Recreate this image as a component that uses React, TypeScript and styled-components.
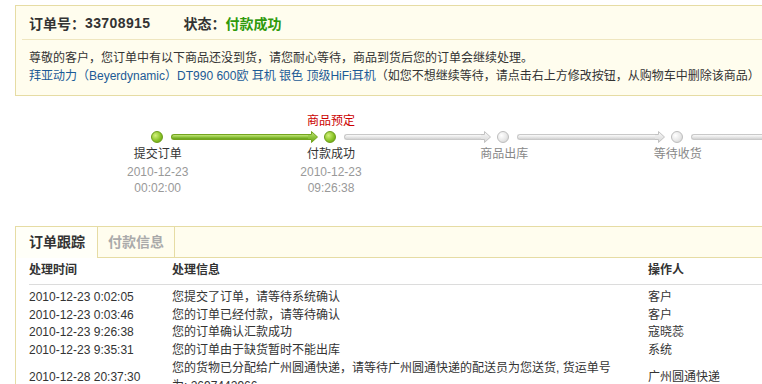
import styled, { createGlobalStyle } from "styled-components";

const GlobalStyle = createGlobalStyle`
    html, body {
        margin: 0;
        padding: 0;
        overflow: hidden;
        background: #fff;
    }
    body {
        font-family: "Liberation Sans", "Noto Sans CJK SC", sans-serif;
        font-size: 12px;
        color: #333;
    }
`;

const BORDER = "#e6dca4";
const CREAM = "#fffdee";

const Page = styled.div`
    width: 800px;
    padding: 5px 0 0 15px;
`;

const OrderBox = styled.div`
    width: 780px;
    border: 1px solid ${BORDER};
    border-right: none;
    background: ${CREAM};
`;

const OrderHead = styled.div`
    height: 33px;
    display: flex;
    align-items: center;
    padding-left: 13px;
    font-size: 14px;
    font-weight: bold;
    color: #333;
`;

const OrderNo = styled.span`
    font-family: "Liberation Sans", sans-serif;
    letter-spacing: 0.4px;
`;

const StatusLabel = styled.span`
    margin-left: 33px;
`;

const StatusValue = styled.span`
    color: #2f9a0c;
`;

const Divider = styled.div`
    margin-left: 6px;
    border-bottom: 1px solid #efe6bf;
`;

const Notice = styled.div`
    padding: 9px 0 10px 13px;
    line-height: 18px;
    white-space: nowrap;
    color: #333;
`;

const ProductLink = styled.a`
    color: #1b5a96;
    text-decoration: none;
`;

const Progress = styled.div`
    display: flex;
    margin-top: 16px;
    padding-left: 56px;
`;

const Step = styled.div`
    width: 173.33px;
    flex: none;
    display: flex;
    flex-direction: column;
    align-items: center;
`;

const Note = styled.div`
    height: 18px;
    line-height: 18px;
    color: #cc0000;
`;

const Track = styled.div`
    width: 100%;
    height: 14px;
    display: flex;
    align-items: center;
`;

const Half = styled.div<{ $side: "left" | "right" }>`
    flex: 1;
    display: flex;
    align-items: center;
    ${p => (p.$side === "left" ? "margin-right: 6px;" : "margin-left: 8px;")}
`;

const Bar = styled.div<{ $done: boolean; $round?: boolean }>`
    flex: 1;
    height: 4px;
    border: 1px solid ${p => (p.$done ? "#74a51f" : "#c9c9c9")};
    border-left: ${p => (p.$round ? undefined : "none")};
    border-right: none;
    border-radius: ${p => (p.$round ? "3px 0 0 3px" : "0")};
    background: ${p =>
        p.$done
            ? "linear-gradient(#c3e57a, #8cc33a 55%, #6c9f1d)"
            : "linear-gradient(#fafafa, #e6e6e6 55%, #d2d2d2)"};
`;

const Dot = styled.div<{ $done: boolean }>`
    width: 12px;
    height: 12px;
    box-sizing: border-box;
    flex: none;
    border-radius: 50%;
    border: 1px solid ${p => (p.$done ? "#6b9c18" : "#bdbdbd")};
    background: ${p =>
        p.$done
            ? "radial-gradient(circle at 35% 35%, #d2f07c, #8cc529 55%, #5f960f)"
            : "radial-gradient(circle at 35% 35%, #ffffff, #e8e8e8 55%, #cdcdcd)"};
`;

const StepLabel = styled.div<{ $done: boolean }>`
    height: 20px;
    line-height: 21px;
    color: ${p => (p.$done ? "#333" : "#888")};
    white-space: nowrap;
`;

const StepTime = styled.div`
    height: 16px;
    line-height: 16px;
    color: #999;
    white-space: nowrap;
`;

const TabBox = styled.div`
    width: 780px;
    margin-top: 30px;
    border: 1px solid ${BORDER};
    border-right: none;
    border-bottom: none;
    background: #fff;
`;

const TabBar = styled.div`
    height: 30px;
    display: flex;
    background: ${CREAM};
    border-bottom: 1px solid ${BORDER};
`;

const Tab = styled.div<{ $active?: boolean }>`
    height: ${p => (p.$active ? "31px" : "30px")};
    line-height: 30px;
    font-size: 14px;
    font-weight: bold;
    box-sizing: border-box;
    padding: ${p => (p.$active ? "0 12px 0 13px" : "0 10px")};
    color: ${p => (p.$active ? "#333" : "#aaa")};
    background: ${p => (p.$active ? "#fffff8" : CREAM)};
    border-left: ${p => (p.$active ? "none" : `1px solid ${BORDER}`)};
    border-right: ${p => (p.$active ? "none" : `1px solid ${BORDER}`)};
    margin-bottom: ${p => (p.$active ? "-1px" : "0")};
    position: relative;
`;

const Table = styled.div`
    margin-left: 13px;
`;

const Row = styled.div<{ $head?: boolean }>`
    display: grid;
    grid-template-columns: 143px 476px 1fr;
    align-items: center;
    line-height: 17.7px;
    color: #333;
    white-space: nowrap;
    ${p =>
        p.$head
            ? `
        height: 26px;
        font-weight: bold;
        border-bottom: 1px solid #dcdcdc;
        margin-bottom: 4px;
    `
            : ""}
`;

const Cell = styled.div``;

type StepInfo = {
    label: string;
    done: boolean;
    note?: string;
    date?: string;
    time?: string;
};

const steps: StepInfo[] = [
    { label: "提交订单", done: true, date: "2010-12-23", time: "00:02:00" },
    { label: "付款成功", done: true, note: "商品预定", date: "2010-12-23", time: "09:26:38" },
    { label: "商品出库", done: false },
    { label: "等待收货", done: false },
];

const logs = [
    { time: "2010-12-23 0:02:05", info: "您提交了订单，请等待系统确认", who: "客户" },
    { time: "2010-12-23 0:03:46", info: "您的订单已经付款，请等待确认", who: "客户" },
    { time: "2010-12-23 9:26:38", info: "您的订单确认汇款成功", who: "寇晓蕊" },
    { time: "2010-12-23 9:35:31", info: "您的订单由于缺货暂时不能出库", who: "系统" },
];

function ArrowHead({ done }: { done: boolean }) {
    const fillId = done ? "headG" : "headS";
    return (
        <svg width="10" height="14" viewBox="0 0 10 14" style={{ flex: "none", display: "block" }}>
            <defs>
                <linearGradient id={fillId} x1="0" y1="0" x2="0" y2="1">
                    <stop offset="0" stopColor={done ? "#c3e57a" : "#fafafa"} />
                    <stop offset="0.55" stopColor={done ? "#8cc33a" : "#e6e6e6"} />
                    <stop offset="1" stopColor={done ? "#6c9f1d" : "#d2d2d2"} />
                </linearGradient>
            </defs>
            <polygon points="0,4.5 3.5,4.5 3.5,1.5 9.5,7 3.5,12.5 3.5,9.5 0,9.5" fill={`url(#${fillId})`} />
            <path
                d="M0,4.5 H3.5 V1.5 L9.5,7 L3.5,12.5 V9.5 H0"
                fill="none"
                stroke={done ? "#74a51f" : "#c2c2c2"}
                strokeWidth="1"
            />
        </svg>
    );
}

export default function App() {
    return (
        <Page>
            <GlobalStyle />
            <OrderBox>
                <OrderHead>
                    <span>订单号：</span>
                    <OrderNo>33708915</OrderNo>
                    <StatusLabel>状态：</StatusLabel>
                    <StatusValue>付款成功</StatusValue>
                </OrderHead>
                <Divider />
                <Notice>
                    尊敬的客户，您订单中有以下商品还没到货，请您耐心等待，商品到货后您的订单会继续处理。
                    <br />
                    <ProductLink href="#">
                        拜亚动力（Beyerdynamic）DT990 600欧 耳机 银色 顶级HiFi耳机
                    </ProductLink>
                    （如您不想继续等待，请点击右上方修改按钮，从购物车中删除该商品）
                </Notice>
            </OrderBox>

            <Progress>
                {steps.map((s, i) => {
                    const prev = steps[i - 1];
                    return (
                        <Step key={s.label}>
                            <Note>{s.note ?? ""}</Note>
                            <Track>
                                <Half $side="left">
                                    {i > 0 && (
                                        <>
                                            <Bar $done={!!prev?.done && s.done} />
                                            <ArrowHead done={!!prev?.done && s.done} />
                                        </>
                                    )}
                                </Half>
                                <Dot $done={s.done} />
                                <Half $side="right">
                                    <Bar $done={s.done && !!steps[i + 1]?.done} $round />
                                </Half>
                            </Track>
                            <StepLabel $done={s.done}>{s.label}</StepLabel>
                            {s.date && <StepTime>{s.date}</StepTime>}
                            {s.time && <StepTime>{s.time}</StepTime>}
                        </Step>
                    );
                })}
            </Progress>

            <TabBox>
                <TabBar>
                    <Tab $active>订单跟踪</Tab>
                    <Tab>付款信息</Tab>
                </TabBar>
                <Table>
                    <Row $head>
                        <Cell>处理时间</Cell>
                        <Cell>处理信息</Cell>
                        <Cell>操作人</Cell>
                    </Row>
                    {logs.map(l => (
                        <Row key={l.time}>
                            <Cell>{l.time}</Cell>
                            <Cell>{l.info}</Cell>
                            <Cell>{l.who}</Cell>
                        </Row>
                    ))}
                    <Row>
                        <Cell>2010-12-28 20:37:30</Cell>
                        <Cell>
                            您的货物已分配给广州圆通快递，请等待广州圆通快递的配送员为您送货, 货运单号
                            <br />
                            为: 2697442966
                        </Cell>
                        <Cell>广州圆通快递</Cell>
                    </Row>
                </Table>
            </TabBox>
        </Page>
    );
}
